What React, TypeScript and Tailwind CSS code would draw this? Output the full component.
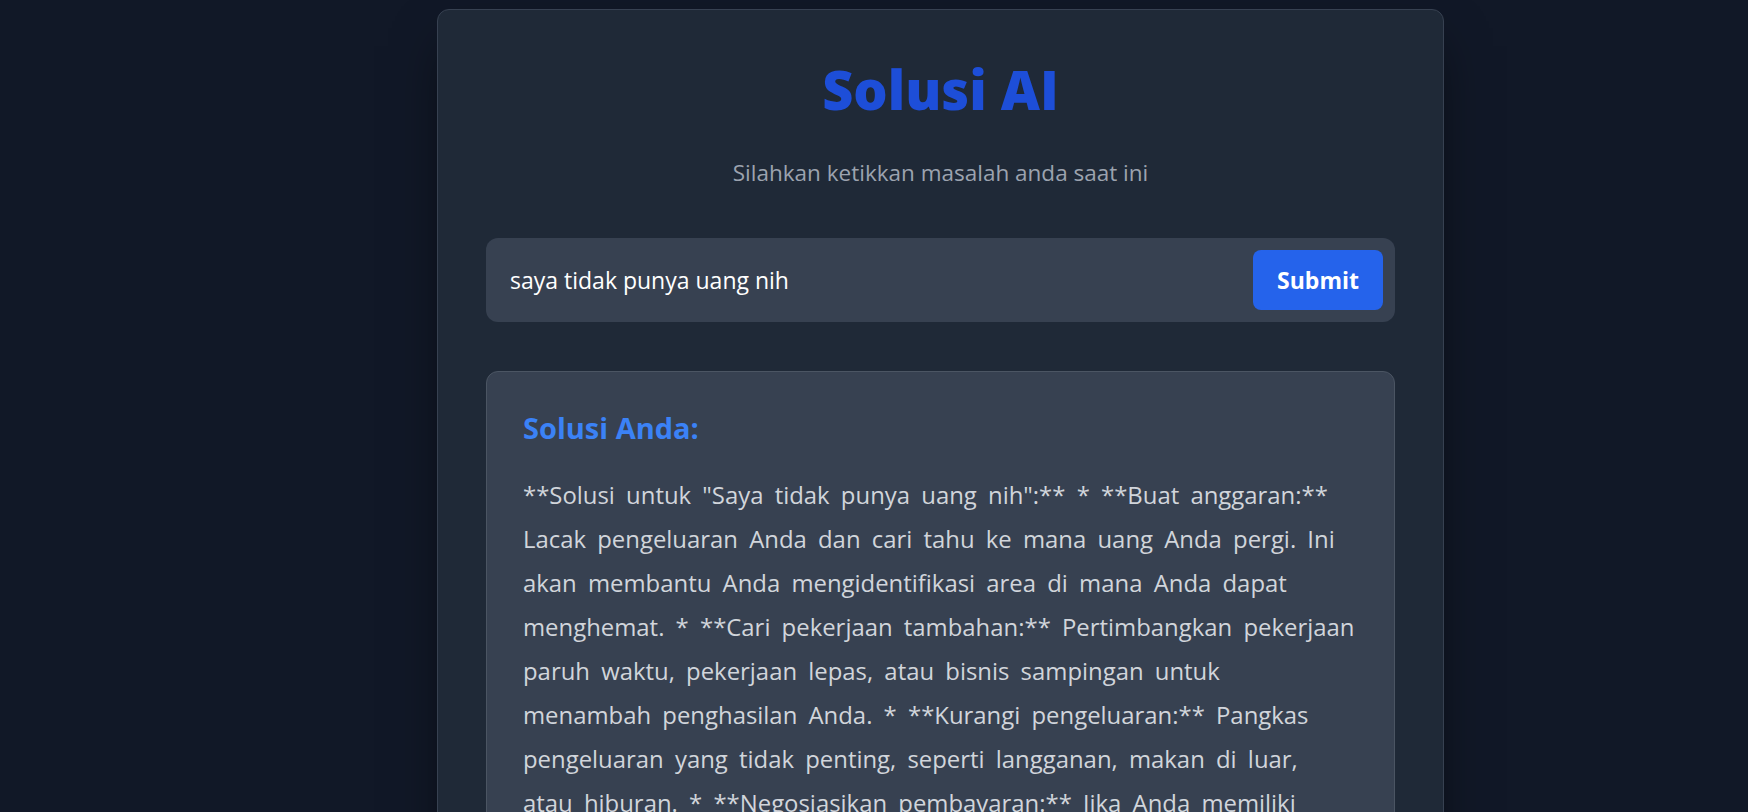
import { useState } from "react";

const answer =
  '**Solusi untuk "Saya tidak punya uang nih":** * **Buat anggaran:** Lacak pengeluaran Anda dan cari tahu ke mana uang Anda pergi. Ini akan membantu Anda mengidentifikasi area di mana Anda dapat menghemat. * **Cari pekerjaan tambahan:** Pertimbangkan pekerjaan paruh waktu, pekerjaan lepas, atau bisnis sampingan untuk menambah penghasilan Anda. * **Kurangi pengeluaran:** Pangkas pengeluaran yang tidak penting, seperti langganan, makan di luar, atau hiburan. * **Negosiasikan pembayaran:** Jika Anda memiliki utang, hubungi kreditur Anda dan coba negosiasikan rencana pembayaran yang lebih terjangkau. * **Cari bantuan:** Jangan ragu untuk meminta bantuan dari keluarga, teman, atau lembaga sosial di sekitar Anda.';

export default function App() {
  const [problem, setProblem] = useState("saya tidak punya uang nih");

  return (
    <div
      className="min-h-screen bg-[#111827] pt-[9px]"
      style={{ fontFamily: '"Open Sans", "Noto Sans", sans-serif' }}
    >
      <div className="ml-[437px] w-[1007px] rounded-xl border border-[#374151] bg-[#1f2937] px-12 pt-[52px] pb-12 shadow-2xl shadow-black/60">
        <h1 className="text-center text-[54px] leading-none font-extrabold text-[#1d4ed8]">
          Solusi AI
        </h1>
        <p className="mt-[43px] text-center text-[22.5px] leading-7 text-[#9ca3af]">
          Silahkan ketikkan masalah anda saat ini
        </p>

        <form
          className="mt-[51px] flex items-center rounded-xl bg-[#374151] p-3"
          onSubmit={(e) => e.preventDefault()}
        >
          <input
            value={problem}
            onChange={(e) => setProblem(e.target.value)}
            className="min-w-0 flex-1 bg-transparent px-3 text-[23px] text-white outline-none"
          />
          <button
            type="submit"
            className="rounded-lg bg-[#2563eb] px-6 py-[14px] text-[23px] leading-8 font-bold text-white"
          >
            Submit
          </button>
        </form>

        <div className="mt-[49px] rounded-xl border border-[#4b5563] bg-[#374151] px-9 pt-[38px] pb-9">
          <h2 className="text-[29px] leading-9 font-bold text-[#3b82f6]">
            Solusi Anda:
          </h2>
          <p className="mt-[27px] text-[23.9px] leading-[44px] [word-spacing:5px] text-[#d1d5db]">
            {answer}
          </p>
        </div>
      </div>
    </div>
  );
}
